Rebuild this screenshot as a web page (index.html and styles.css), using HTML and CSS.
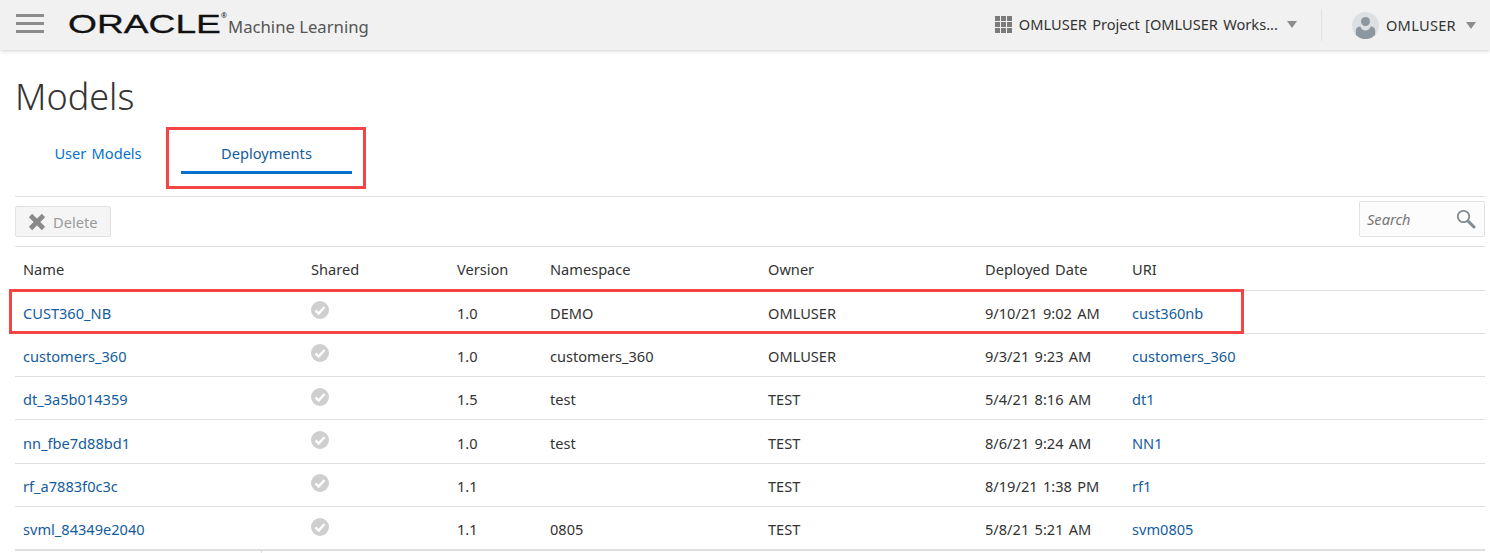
FILE: index.html
```html
<!DOCTYPE html>
<html>
	<head>
		<meta charset="utf-8">
		<title>Models</title>
		<link rel="stylesheet" href="styles.css">
	</head>
	<body>
		<header class="topbar">
			<button class="burger" aria-label="Menu"><i></i><i></i><i></i></button>
			<div class="brand">
				<span class="oracle"><span class="oracle-word">ORACLE</span><sup class="reg">®</sup></span>
				<span class="product">Machine Learning</span>
			</div>
			<div class="project">
				<svg class="grid-icon" width="17" height="17" viewBox="0 0 17 17">
					<path fill="#7b7b7b" d="M0 0h5v5H0zM6 0h5v5H6zM12 0h5v5h-5zM0 6h5v5H0zM6 6h5v5H6zM12 6h5v5h-5zM0 12h5v5H0zM6 12h5v5H6zM12 12h5v5h-5z"/>
				</svg>
				<span class="project-name">OMLUSER Project [OMLUSER Works...</span>
				<span class="caret"></span>
			</div>
			<div class="user">
				<svg class="avatar" width="27" height="27" viewBox="0 0 27 27">
					<circle cx="13.5" cy="13.5" r="13.5" fill="#dde0e3"/>
					<circle cx="13.5" cy="9.5" r="4.5" fill="#8d979f"/>
					<path fill="#8d979f" d="M3.8 23v-4.5c0-2.5 2-4 4.5-4 1 2.5 2.700 4 5.200 4s4.200-1.500 5.200-4c2.500 0 4.500 1.500 4.500 4V23a13.500 13.500 0 0 1-19.400 0z"/>
				</svg>
				<span class="user-name">OMLUSER</span>
				<span class="caret"></span>
			</div>
		</header>

		<main class="page">
			<h1 class="title">Models</h1>
			<nav class="tabs">
				<a class="tab tab-users">User Models</a>
				<a class="tab tab-active">Deployments</a>
			</nav>
			<div class="toolbar">
				<button class="delete">
					<svg width="18" height="18" viewBox="0 0 18 18">
						<path fill="none" stroke="#8a8a8a" stroke-width="4.600" d="M2.500 2.500l13 13M15.500 2.500l-13 13"/>
					</svg>
					Delete
				</button>
				<div class="search">
					<span class="search-text">Search</span>
					<svg width="20" height="20" viewBox="0 0 20 20">
						<circle cx="7.500" cy="7.500" r="5.700" fill="none" stroke="#7f8a92" stroke-width="1.800"/>
						<path fill="none" stroke="#7f8a92" stroke-width="3" stroke-linecap="round" d="M12.500 12.500l5.500 5.500"/>
					</svg>
				</div>
			</div>
			<table class="models">
				<colgroup>
					<col class="c-name"><col class="c-shared"><col class="c-version"><col class="c-ns"><col class="c-owner"><col class="c-date"><col class="c-uri">
				</colgroup>
				<thead>
					<tr><th>Name</th><th>Shared</th><th>Version</th><th>Namespace</th><th>Owner</th><th>Deployed Date</th><th>URI</th></tr>
				</thead>
				<tbody>
					<tr>
						<td class="cell-marked"><a>CUST360_NB</a></td>
						<td><svg class="check" width="18" height="18" viewBox="0 0 18 18"><circle cx="9" cy="9" r="9" fill="#cfcfcf"/><path fill="none" stroke="#fff" stroke-width="2.400" d="M4.500 9.500l3.200 3 5.800-6.500"/></svg></td>
						<td>1.0</td><td>DEMO</td><td>OMLUSER</td><td>9/10/21 9:02 AM</td><td><a>cust360nb</a></td>
					</tr>
					<tr>
						<td><a>customers_360</a></td>
						<td><svg class="check" width="18" height="18" viewBox="0 0 18 18"><circle cx="9" cy="9" r="9" fill="#cfcfcf"/><path fill="none" stroke="#fff" stroke-width="2.400" d="M4.500 9.500l3.200 3 5.800-6.500"/></svg></td>
						<td>1.0</td><td>customers_360</td><td>OMLUSER</td><td>9/3/21 9:23 AM</td><td><a>customers_360</a></td>
					</tr>
					<tr>
						<td><a>dt_3a5b014359</a></td>
						<td><svg class="check" width="18" height="18" viewBox="0 0 18 18"><circle cx="9" cy="9" r="9" fill="#cfcfcf"/><path fill="none" stroke="#fff" stroke-width="2.400" d="M4.500 9.500l3.200 3 5.800-6.500"/></svg></td>
						<td>1.5</td><td>test</td><td>TEST</td><td>5/4/21 8:16 AM</td><td><a>dt1</a></td>
					</tr>
					<tr>
						<td><a>nn_fbe7d88bd1</a></td>
						<td><svg class="check" width="18" height="18" viewBox="0 0 18 18"><circle cx="9" cy="9" r="9" fill="#cfcfcf"/><path fill="none" stroke="#fff" stroke-width="2.400" d="M4.500 9.500l3.200 3 5.800-6.500"/></svg></td>
						<td>1.0</td><td>test</td><td>TEST</td><td>8/6/21 9:24 AM</td><td><a>NN1</a></td>
					</tr>
					<tr>
						<td><a>rf_a7883f0c3c</a></td>
						<td><svg class="check" width="18" height="18" viewBox="0 0 18 18"><circle cx="9" cy="9" r="9" fill="#cfcfcf"/><path fill="none" stroke="#fff" stroke-width="2.400" d="M4.500 9.500l3.200 3 5.800-6.500"/></svg></td>
						<td>1.1</td><td></td><td>TEST</td><td>8/19/21 1:38 PM</td><td><a>rf1</a></td>
					</tr>
					<tr>
						<td><a>svml_84349e2040</a></td>
						<td><svg class="check" width="18" height="18" viewBox="0 0 18 18"><circle cx="9" cy="9" r="9" fill="#cfcfcf"/><path fill="none" stroke="#fff" stroke-width="2.400" d="M4.500 9.500l3.200 3 5.800-6.500"/></svg></td>
						<td>1.1</td><td>0805</td><td>TEST</td><td>5/8/21 5:21 AM</td><td><a>svm0805</a></td>
					</tr>
				</tbody>
			</table>
			<div class="table-foot"><span class="foot-cell"></span></div>
		</main>
	</body>
</html>
```

FILE: styles.css
```css
*, *::after{
	margin: 0;
	padding: 0;
	box-sizing: border-box;
}
html, body{
	height: 553px;
	overflow: hidden;
}
body{
	background-color: #fff;
	font-family: "Noto Sans", "Open Sans", sans-serif;
	font-size: 14.6px;
	word-spacing: 1.5px;
	color: #333;
}

/* top bar */
.topbar{
	display: flex;
	align-items: center;
	height: 50px;
	background-color: #f1f1f1;
	box-shadow: 0 1px 4px rgba(0,0,0,0.18);
	position: relative;
}
.burger{
	display: flex;
	flex-direction: column;
	gap: 5px;
	width: 28px;
	margin: 0 24px 3px 16px;
	border: 0;
	background: none;
}
.burger i{
	display: block;
	height: 3px;
	background-color: #8c8c8c;
}
.brand{
	display: flex;
	align-items: center;
	flex: 1;
	margin-bottom: 3px;
}
.oracle{
	display: flex;
	width: 160px;
	height: 24px;
	color: #111;
}
.oracle-word{
	display: block;
	font-family: "Liberation Sans", sans-serif;
	font-size: 26px;
	line-height: 24px;
	-webkit-text-stroke: 0.3px #111;
	transform: scaleX(1.43);
	transform-origin: left center;
}
.reg{
	font-size: 7px;
	line-height: 7px;
	margin-left: 46px;
}
.product{
	font-size: 16.7px;
	word-spacing: 0;
	color: #555;
	margin-top: 6px;
}
.project{
	display: flex;
	align-items: center;
	margin-right: 24px;
	padding-bottom: 2px;
}
.grid-icon{
	margin-right: 7px;
}
.project-name{
	color: #333;
	margin-right: 9px;
}
.caret{
	display: block;
	width: 0;
	height: 0;
	border-left: 5.5px solid transparent;
	border-right: 5.5px solid transparent;
	border-top: 7px solid #8c8c8c;
}
.user{
	display: flex;
	align-items: center;
	height: 32px;
	padding: 0 14px 0 30px;
	border-left: 1px solid #e2e2e2;
}
.avatar{
	margin-right: 7px;
}
.user-name{
	letter-spacing: 0.3px;
	margin-right: 10px;
}

/* page */
.page{
	padding: 0 5px 0 15px;
}
.title{
	font-weight: 300;
	font-size: 36px;
	word-spacing: 0;
	line-height: 46px;
	margin-top: 24px;
	color: #333;
}
.tabs{
	display: flex;
	height: 67px;
	margin-top: 10px;
	border-bottom: 1px solid #dfdfdf;
}
.tab{
	position: relative;
	height: 44px;
	padding-top: 13px;
	text-align: center;
	color: #0572ce;
	line-height: 20px;
}
.tab-users{
	width: 166px;
}
.tab-active{
	width: 171px;
	color: #145c9e;
	border-bottom: 3px solid #0572ce;
}
/* callout boxes drawn over the screen */
.tab-active::after{
	content: "";
	position: absolute;
	top: -3px;
	left: -15px;
	width: 200px;
	height: 62px;
	border: 3px solid #f44444;
}
.toolbar{
	display: flex;
	justify-content: space-between;
	align-items: flex-start;
	height: 50px;
	border-bottom: 1px solid #dfdfdf;
}
.delete{
	display: flex;
	align-items: center;
	gap: 7px;
	width: 96px;
	height: 31px;
	margin-top: 9px;
	padding-left: 12px;
	border: 1px solid #e2e2e2;
	border-radius: 2px;
	background-color: #f5f5f5;
	font: inherit;
	color: #9a9a9a;
}
.search{
	display: flex;
	align-items: center;
	justify-content: space-between;
	width: 126px;
	height: 36px;
	margin-top: 4px;
	padding: 0 8px 0 7px;
	border: 1px solid #e2e2e2;
	border-radius: 2px;
	background-color: #fcfcfc;
	color: #757575;
	font-style: italic;
}
.models{
	width: 1470px;
	table-layout: fixed;
	border-collapse: collapse;
}
.c-name{ width: 288px; }
.c-shared{ width: 146px; }
.c-version{ width: 93px; }
.c-ns{ width: 218px; }
.c-owner{ width: 217px; }
.c-date{ width: 147px; }
.c-uri{ width: 361px; }
.models th, .models td{
	padding: 2px 8px 0;
	text-align: left;
	font-weight: normal;
	border-bottom: 1px solid #dfdfdf;
	white-space: nowrap;
}
.models th{
	height: 43px;
}
.models td{
	height: 43.300px;
}
.models a{
	color: #145c9e;
}
.check{
	display: block;
	margin: -5px 0 0;
}
.cell-marked{
	position: relative;
}
.cell-marked::after{
	content: "";
	position: absolute;
	top: -2px;
	left: -6px;
	width: 1235px;
	height: 45px;
	border: 3px solid #f44444;
}
.table-foot{
	height: 4px;
	border-top: 1px solid #dfdfdf;
}
.foot-cell{
	display: block;
	width: 247px;
	height: 4px;
	border-right: 1px solid #dfdfdf;
}
```
